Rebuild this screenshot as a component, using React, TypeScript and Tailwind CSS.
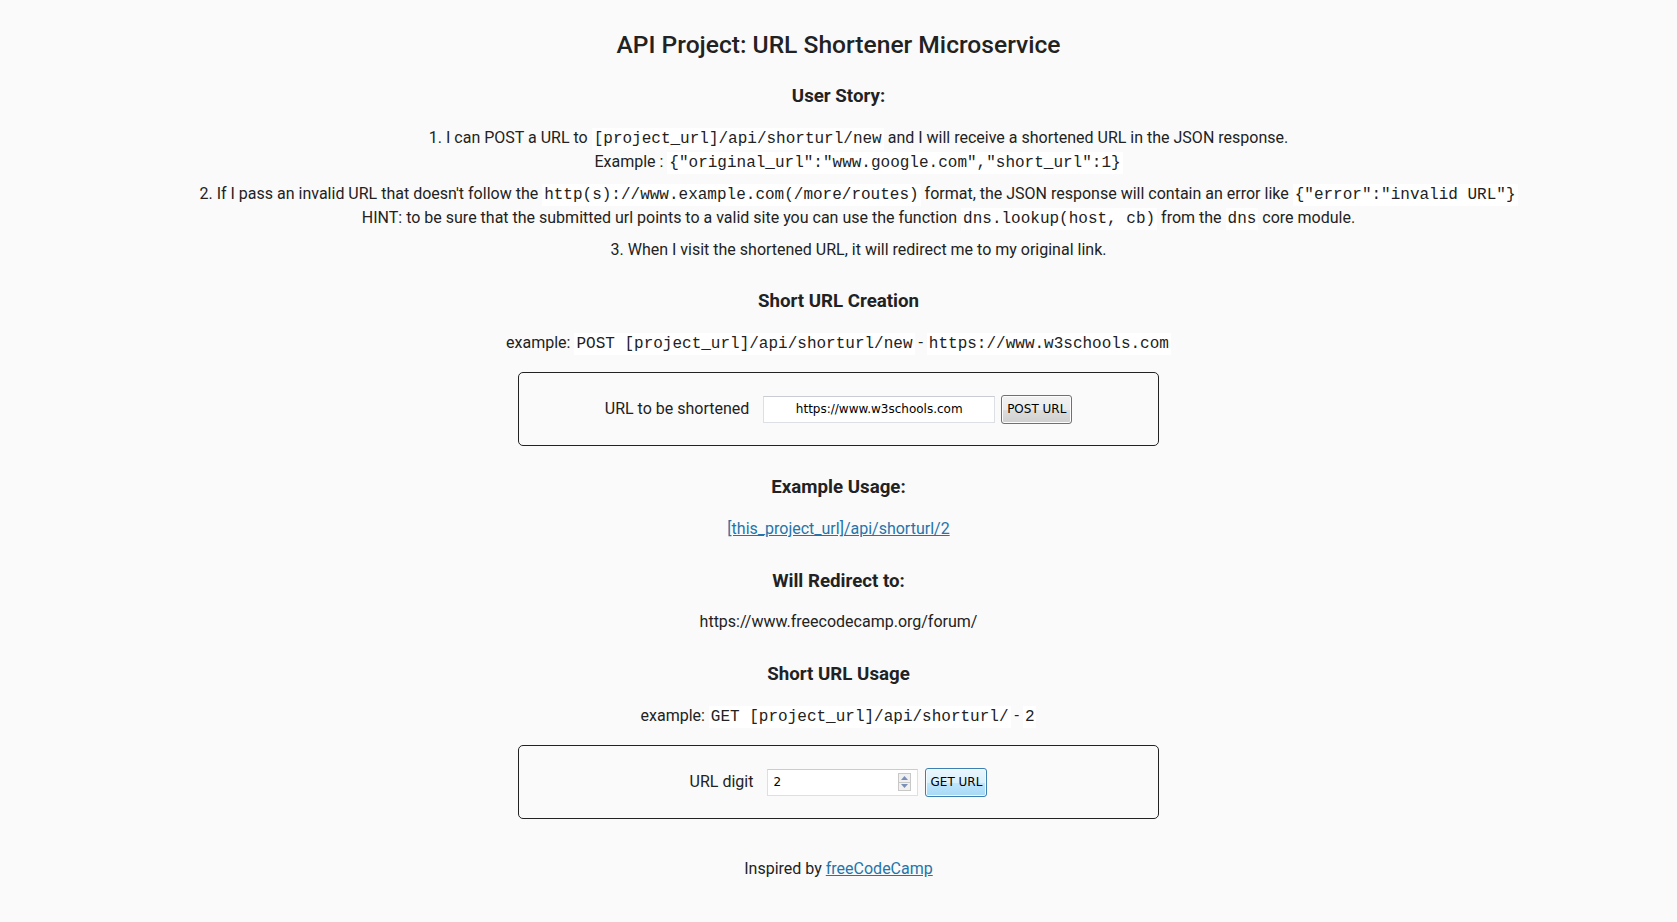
import React from "react";

const mono = "font-['Liberation_Mono','Courier_New',monospace]";

function Code({ children }: { children: React.ReactNode }) {
  return (
    <code className={`${mono} bg-white text-[#222] text-[16px] leading-none px-[2px] py-[2px]`}>{children}</code>
  );
}

function Spinner() {
  return (
    <div className="flex flex-col w-[13px] h-[18px] border border-[#c8c8c8] bg-[#f0f0f0]">
      <div className="flex-1 flex items-center justify-center border-b border-[#c8c8c8]">
        <svg width="7" height="4" viewBox="0 0 7 4">
          <path d="M0 4 L3.5 0 L7 4 Z" fill="#7a8fb8" />
        </svg>
      </div>
      <div className="flex-1 flex items-center justify-center">
        <svg width="7" height="4" viewBox="0 0 7 4">
          <path d="M0 0 L3.5 4 L7 0 Z" fill="#7a8fb8" />
        </svg>
      </div>
    </div>
  );
}

export default function App() {
  return (
    <div className="min-h-[922px] bg-[#fafafa] text-[#222] font-['Roboto',sans-serif] text-[16px] text-center pb-10">
      <h1 className="pt-[28px] text-[24.6px] leading-[34px] font-medium">
        API Project: URL Shortener Microservice
      </h1>
      <h3 className="mt-[21px] text-[18.7px] leading-[26px] font-bold">User Story:</h3>
      <ol className="pl-10 mt-[17px] leading-[24px]">
        <li>
          1. I can POST a URL to <Code>[project_url]/api/shorturl/new</Code> and I will receive a
          shortened URL in the JSON response.
          <br />
          Example : <Code>{'{"original_url":"www.google.com","short_url":1}'}</Code>
        </li>
        <li className="mt-[8px]">
          2. If I pass an invalid URL that doesn't follow the{" "}
          <Code>http(s)://www.example.com(/more/routes)</Code> format, the JSON response will contain
          an error like <Code>{'{"error":"invalid URL"}'}</Code>
          <br />
          HINT: to be sure that the submitted url points to a valid site you can use the function{" "}
          <Code>dns.lookup(host, cb)</Code> from the <Code>dns</Code> core module.
        </li>
        <li className="mt-[8px]">
          3. When I visit the shortened URL, it will redirect me to my original link.
        </li>
      </ol>

      <h3 className="mt-[26px] text-[18.7px] leading-[26px] font-bold">Short URL Creation</h3>
      <p className="mt-[17px] leading-[24px]">
        example: <Code>POST [project_url]/api/shorturl/new</Code> -{" "}
        <Code>https://www.w3schools.com</Code>
      </p>

      <div className="mx-auto mt-[17px] w-[641px] h-[74px] border border-[#222] rounded-[5px] flex items-center justify-center">
        <span className="mr-[14px]">URL to be shortened</span>
        <div className="w-[232px] h-[27px] bg-white border border-[#dcdfe4] border-t-[#c9ccd2] flex items-center justify-center font-['DejaVu_Sans',sans-serif] text-[12px] text-black">
          https://www.w3schools.com
        </div>
        <button className="ml-[6px] w-[71px] h-[29px] rounded-[3px] border border-[#707070] bg-[linear-gradient(#f2f2f2_0%,#ebebeb_50%,#dddddd_51%,#cfcfcf_100%)] font-['DejaVu_Sans',sans-serif] text-[12px] text-black shadow-[inset_0_0_0_1px_#fcfcfc]">
          POST URL
        </button>
      </div>

      <h3 className="mt-[28px] text-[18.7px] leading-[26px] font-bold">Example Usage:</h3>
      <p className="mt-[17px] leading-[24px]">
        <a href="#" className="text-[#2574a9] underline">
          [this_project_url]/api/shorturl/2
        </a>
      </p>

      <h3 className="mt-[27px] text-[18.7px] leading-[26px] font-bold">Will Redirect to:</h3>
      <p className="mt-[16px] leading-[24px]">https://www.freecodecamp.org/forum/</p>

      <h3 className="mt-[27px] text-[18.7px] leading-[26px] font-bold">Short URL Usage</h3>
      <p className="mt-[17px] leading-[24px]">
        example: <Code>GET [project_url]/api/shorturl/</Code> - <Code>2</Code>
      </p>

      <div className="mx-auto mt-[17px] w-[641px] h-[74px] border border-[#222] rounded-[5px] flex items-center justify-center">
        <span className="mr-[14px]">URL digit</span>
        <div className="w-[151px] h-[27px] bg-white border border-[#dcdfe4] border-t-[#c9ccd2] flex items-center justify-between pl-[5px] pr-[6px] font-['DejaVu_Sans',sans-serif] text-[12px] text-black">
          <span>2</span>
          <Spinner />
        </div>
        <button className="ml-[7px] w-[62px] h-[29px] rounded-[3px] border border-[#3c7fb1] bg-[linear-gradient(#eaf6fd_0%,#d9f0fc_50%,#bee6fd_51%,#a7d9f5_100%)] font-['DejaVu_Sans',sans-serif] text-[12px] text-black shadow-[inset_0_0_0_1px_#f4fbff]">
          GET URL
        </button>
      </div>

      <p className="mt-[38px] leading-[24px]">
        Inspired by{" "}
        <a href="#" className="text-[#2574a9] underline">
          freeCodeCamp
        </a>
      </p>
    </div>
  );
}
